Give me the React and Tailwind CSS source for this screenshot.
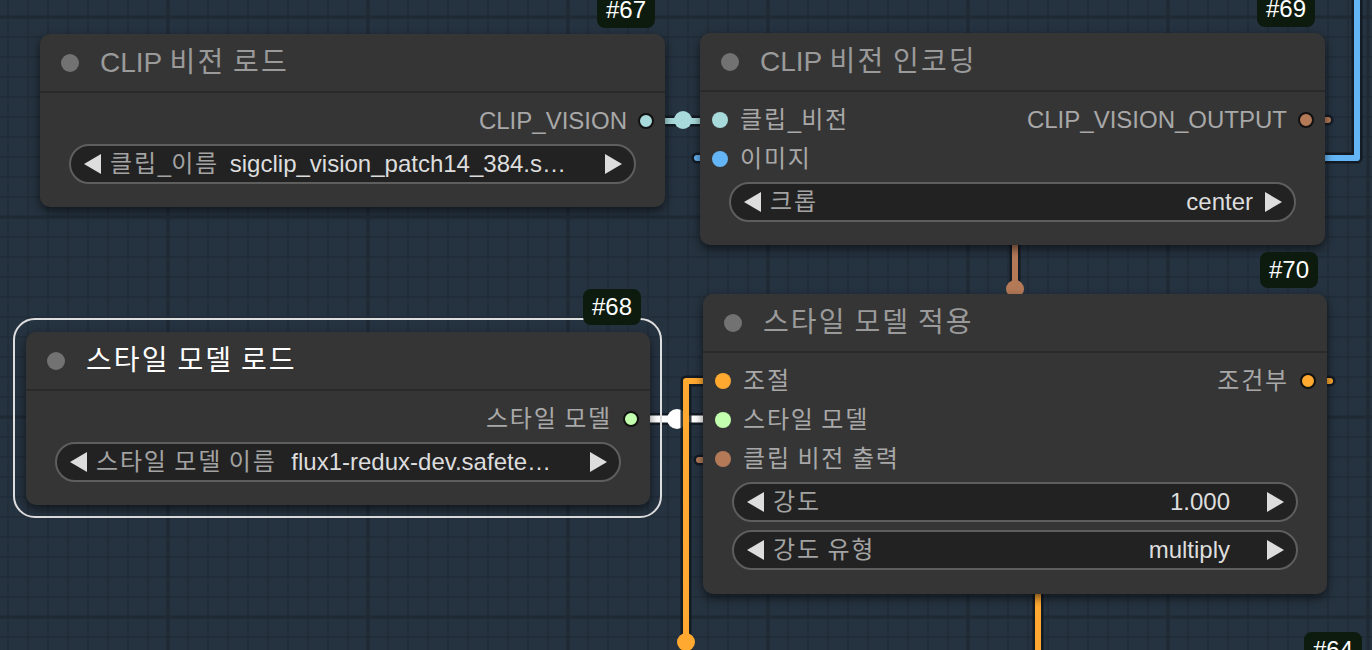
import React from 'react'

const FONT = "font-['Liberation_Sans','Noto_Sans_CJK_KR',sans-serif]"

const C = {
  clipVision: '#a8dadc',
  image: '#64b5f6',
  clipOut: '#b47a58',
  cond: '#ffa931',
  style: '#c2ffae',
}

// hangul in the shot is set a touch wider than Noto's, so space those runs out
function K({ t }) {
  return t.split(/([\uAC00-\uD7A3]+)/).map((part, i) =>
    /[\uAC00-\uD7A3]/.test(part)
      ? <span key={i} className="tracking-[0.075em]">{part}</span>
      : <React.Fragment key={i}>{part}</React.Fragment>
  )
}

// grid + links, drawn under the nodes
function Backdrop() {
  const minorX = []
  for (let x = 8; x < 1372; x += 20) minorX.push(x)
  const minorY = []
  for (let y = 17; y < 650; y += 20) minorY.push(y)
  const majorX = [168, 368, 568, 768, 968, 1168, 1368]
  const majorY = [17, 217, 417, 617]

  const wire = (d, color, w = 6) => (
    <g>
      <path d={d} fill="none" stroke="#111820" strokeOpacity="0.85" strokeWidth={w + 5} strokeLinecap="round" strokeLinejoin="round" />
      <path d={d} fill="none" stroke={color} strokeWidth={w} strokeLinecap="round" strokeLinejoin="round" />
    </g>
  )

  return (
    <svg className="absolute inset-0" width="1372" height="650" viewBox="0 0 1372 650">
      <rect width="1372" height="650" fill="#25323f" />
      {minorX.map(x => <line key={'vx' + x} x1={x} y1="0" x2={x} y2="650" stroke="#212d39" strokeWidth="1.5" />)}
      {minorY.map(y => <line key={'hy' + y} x1="0" y1={y} x2="1372" y2={y} stroke="#212d39" strokeWidth="1.5" />)}
      {majorX.map(x => <line key={'mx' + x} x1={x} y1="0" x2={x} y2="650" stroke="#1e2934" strokeWidth="3" />)}
      {majorY.map(y => <line key={'my' + y} x1="0" y1={y} x2="1372" y2={y} stroke="#1e2934" strokeWidth="3" />)}

      {/* CLIP_VISION -> 클립_비전 */}
      {wire('M646 121 H720', C.clipVision)}
      <circle cx="683" cy="120" r="9" fill={C.clipVision} />

      {/* image link coming round the right side */}
      {wire('M1357 -10 V158 H697', C.image)}

      {/* clip vision output stubs + vertical */}
      {wire('M1316 120 H1328', C.clipOut)}
      {wire('M1015 238 V300', C.clipOut)}
      <circle cx="1015" cy="289" r="9" fill={C.clipOut} />
      {wire('M699 460 H712', C.clipOut)}

      {/* style model (selected -> white) */}
      {wire('M632 419 H722', '#ffffff', 7)}
      <circle cx="677" cy="419" r="10" fill="#ffffff" />

      {/* conditioning */}
      {wire('M722 381 H686 V670', C.cond)}
      <circle cx="686" cy="642" r="9" fill={C.cond} />
      {wire('M1318 381 H1330', C.cond)}
      {wire('M1038 585 V670', C.cond)}
    </svg>
  )
}

function Arrow({ dir }) {
  return (
    <svg width="17" height="20" viewBox="0 0 17 20" className="shrink-0">
      {dir === 'l'
        ? <polygon points="17,0 17,20 0,10" fill="#dddddd" />
        : <polygon points="0,0 0,20 17,10" fill="#dddddd" />}
    </svg>
  )
}

function Widget({ label, value, gap = 'mr-[12px]' }) {
  return (
    <div className="mx-[29px] h-[40px] rounded-full border-2 border-[#5e5e5e] bg-[#222222] flex items-center pl-[13px] pr-[12px] text-[24px] leading-none">
      <Arrow dir="l" />
      <span className="ml-[9px] text-[#a3a3a3] whitespace-nowrap"><K t={label} /></span>
      <span className={'flex-1 text-right text-[#dddddd] whitespace-nowrap ' + gap}>{value}</span>
      <Arrow dir="r" />
    </div>
  )
}

function Dot({ color, out }) {
  return (
    <span
      className={'absolute top-1/2 -translate-y-1/2 w-[16px] h-[16px] rounded-full ' + (out ? 'right-[11px] border-2 border-[#111111]' : 'left-[12px]')}
      style={{ background: color }}
    />
  )
}

function Node({ x, y, w, title, selected, inputs = [], outputs = [], widgets = [], pb = 'pb-[23px]' }) {
  const rows = Math.max(inputs.length, outputs.length)
  return (
    <div className="absolute" style={{ left: x, top: y, width: w }}>
      {selected && <div className="absolute -left-[13px] -right-[12px] -top-[14px] -bottom-[13px] rounded-[22px] border-2 border-[#dedede]" />}
      <div className="relative rounded-[10px] bg-[#353535] shadow-[0_4px_10px_rgba(0,0,0,0.55)]">
        <div className="h-[59px] flex items-center pl-[21px] border-b-2 border-[#2a2a2a]">
          <span className="w-[18px] h-[18px] rounded-full bg-[#727272]" />
          <span className={'ml-[21px] text-[28px] leading-none whitespace-nowrap ' + (selected ? 'text-white' : 'text-[#9a9a9a]')}><K t={title} /></span>
        </div>
        <div className={'pt-[8px] ' + pb}>
          {Array.from({ length: rows }).map((_, i) => (
            <div key={i} className="relative h-[39px] flex items-center text-[24px] leading-none text-[#a8a8a8]">
              {inputs[i] && <><Dot color={inputs[i].c} /><span className="pl-[40px] whitespace-nowrap"><K t={inputs[i].n} /></span></>}
              {outputs[i] && <><span className="ml-auto pr-[38px] whitespace-nowrap"><K t={outputs[i].n} /></span><Dot color={outputs[i].c} out /></>}
            </div>
          ))}
          <div className="mt-[4px] flex flex-col gap-[8px]">
            {widgets.map(wd => <Widget key={wd.label} {...wd} />)}
          </div>
        </div>
      </div>
    </div>
  )
}

function Badge({ x, y, text }) {
  return (
    <div className="absolute h-[36px] px-[9px] rounded-[8px] bg-[#0d1b0f] text-white text-[24px] leading-none flex items-center" style={{ left: x, top: y }}>
      {text}
    </div>
  )
}

export default function App() {
  return (
    <div className={'relative w-[1372px] h-[650px] overflow-hidden ' + FONT}>
      <Backdrop />

      <Node
        x={40} y={34} w={625} title="CLIP 비전 로드"
        outputs={[{ n: 'CLIP_VISION', c: C.clipVision }]}
        widgets={[{ label: '클립_이름', value: 'sigclip_vision_patch14_384.s…', gap: 'mr-[39px]' }]}
      />
      <Node
        x={700} y={33} w={625} title="CLIP 비전 인코딩"
        inputs={[{ n: '클립_비전', c: C.clipVision }, { n: '이미지', c: C.image }]}
        outputs={[{ n: 'CLIP_VISION_OUTPUT', c: C.clipOut }]}
        widgets={[{ label: '크롭', value: 'center' }]}
      />
      <Node
        x={26} y={332} w={624} title="스타일 모델 로드" selected
        outputs={[{ n: '스타일 모델', c: C.style }]}
        widgets={[{ label: '스타일 모델 이름', value: 'flux1-redux-dev.safete…', gap: 'mr-[39px]' }]}
      />
      <Node
        x={703} y={294} w={624} title="스타일 모델 적용" pb="pb-[24px]"
        inputs={[{ n: '조절', c: C.cond }, { n: '스타일 모델', c: C.style }, { n: '클립 비전 출력', c: C.clipOut }]}
        outputs={[{ n: '조건부', c: C.cond }]}
        widgets={[{ label: '강도', value: '1.000', gap: 'mr-[37px]' }, { label: '강도 유형', value: 'multiply', gap: 'mr-[37px]' }]}
      />

      <Badge x={597} y={-8} text="#67" />
      <Badge x={1257} y={-9} text="#69" />
      <Badge x={583} y={289} text="#68" />
      <Badge x={1260} y={252} text="#70" />
      <Badge x={1304} y={632} text="#64" />
    </div>
  )
}
